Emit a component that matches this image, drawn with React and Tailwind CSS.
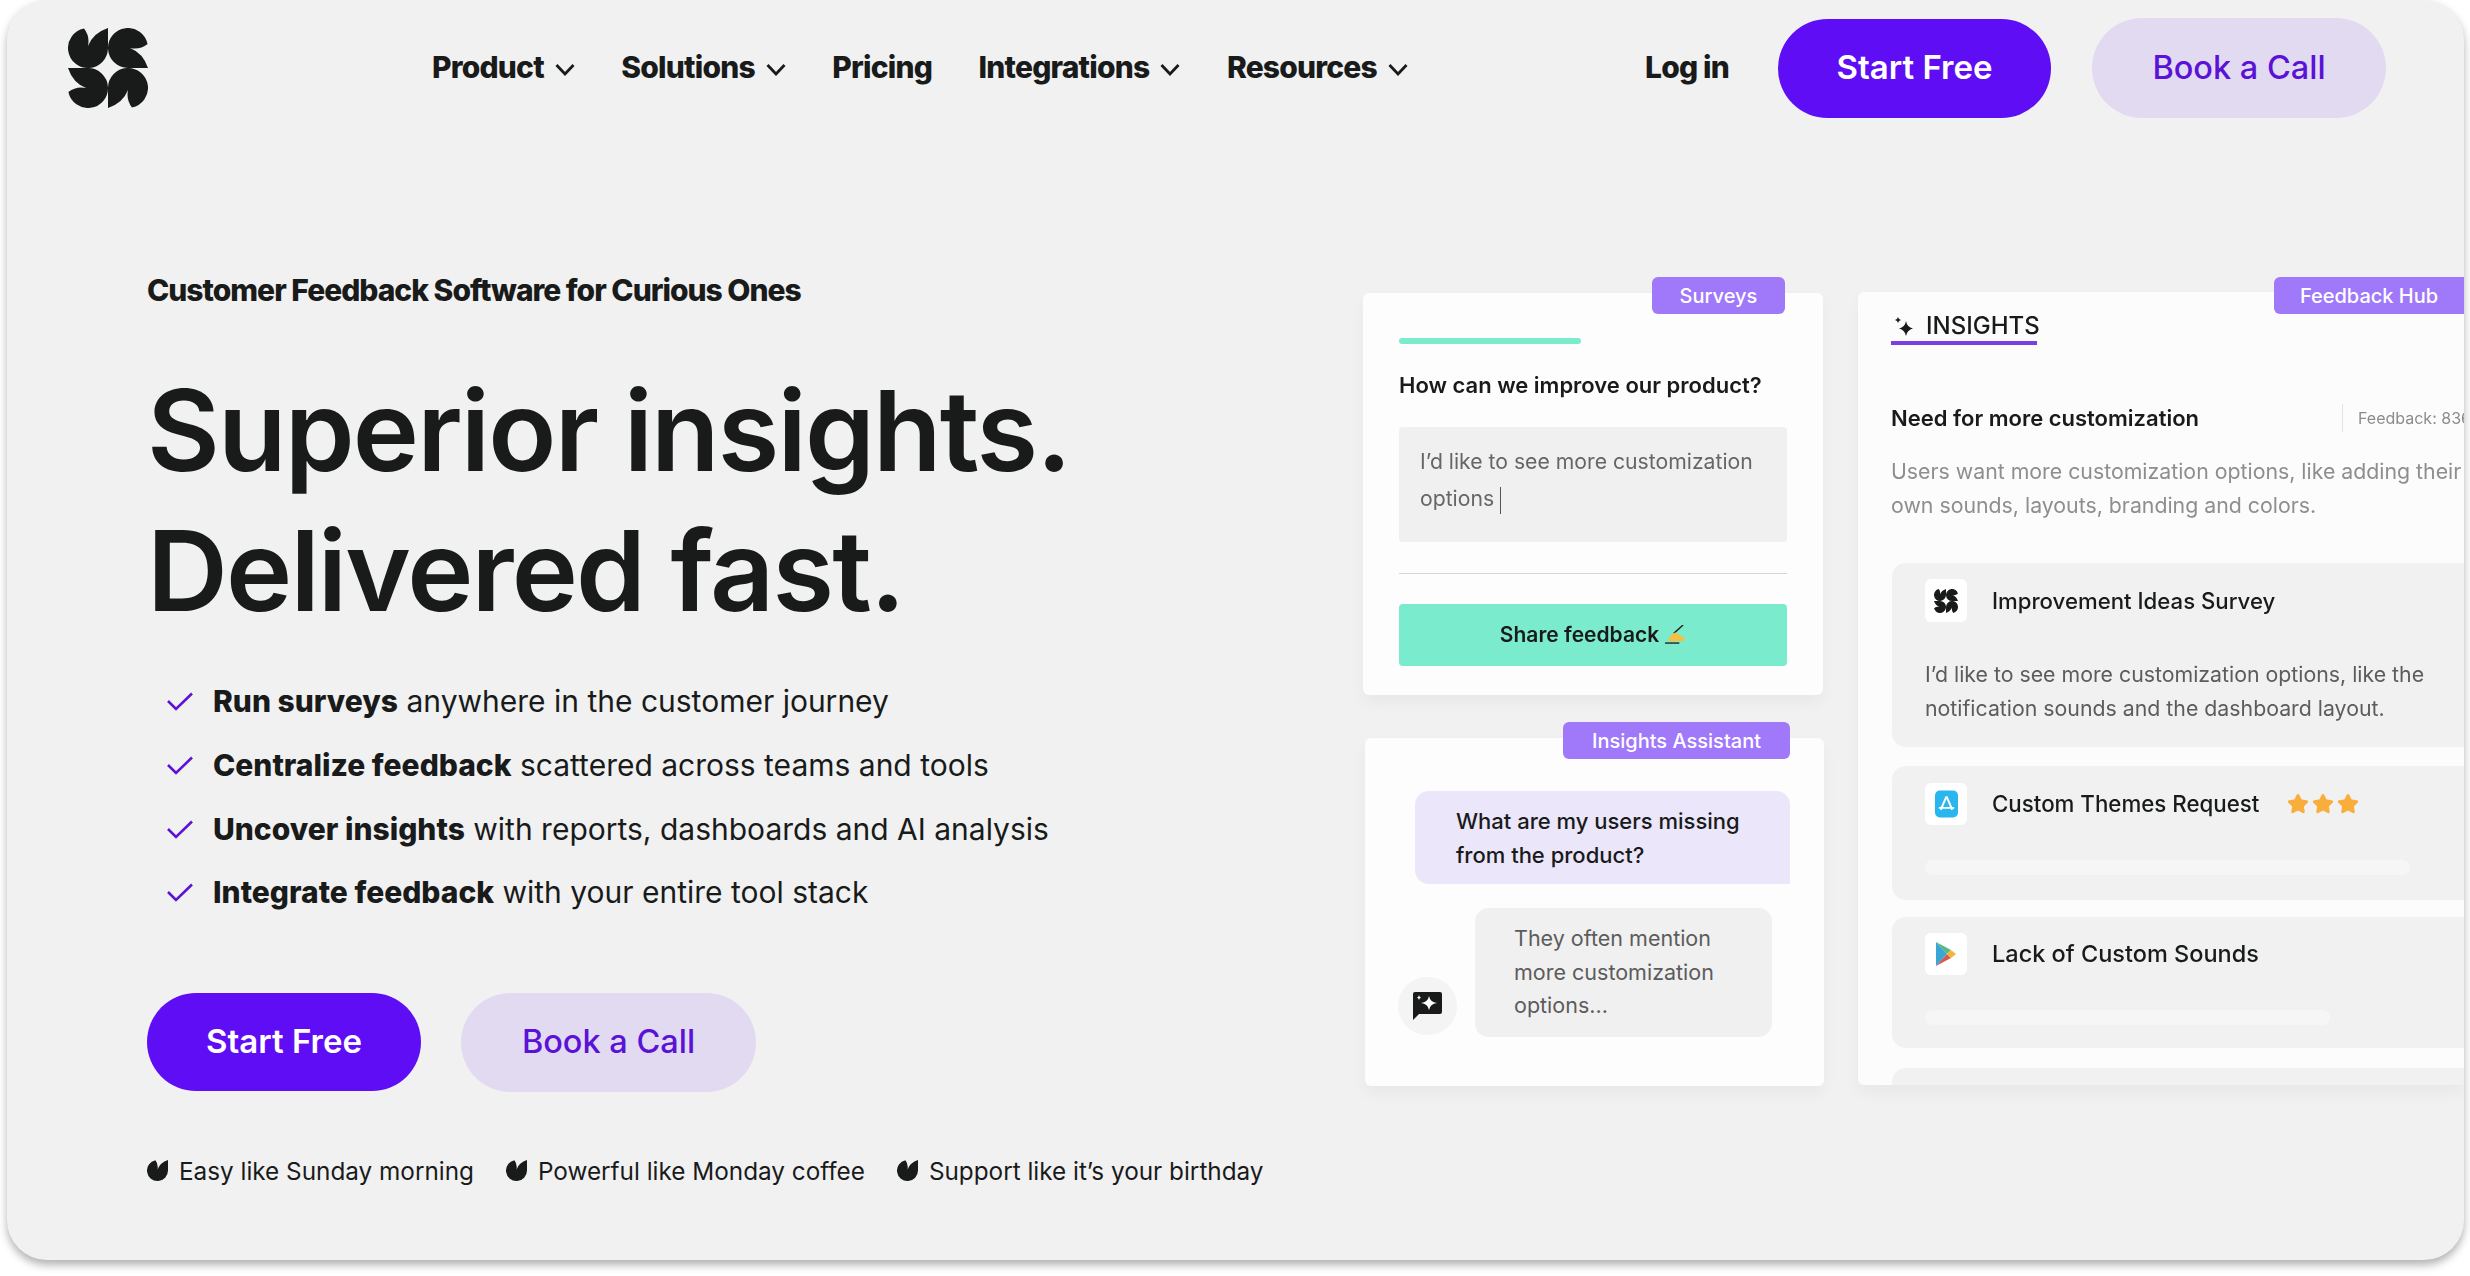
import { Star } from 'lucide-react';

// one petal of the logo; the full mark is this shape turned four times
const PETAL = 'M40 0V20A20 20 0 1 1 16 0.4Q22 8 20 18Q25 5 40 0Z';

const Logo = ({ className }) => (
  <svg viewBox="0 0 80 80" className={className} fill="#191b1b">
    {[0, 90, 180, 270].map((deg) => (
      <path key={deg} d={PETAL} transform={`rotate(${deg} 40 40)`} />
    ))}
  </svg>
);

const Leaf = () => (
  <svg viewBox="0 0 40 40" className="w-[21px] h-[21px] shrink-0" fill="#191b1b">
    <path d={PETAL} />
  </svg>
);

const Chevron = () => (
  <svg viewBox="0 0 20 13" className="w-[20px] h-[13px] ml-[11px] mt-[5px]" fill="none" stroke="#191b1b" strokeWidth="2.8">
    <path d="M1.5 2 L10 11 L18.5 2" />
  </svg>
);

const Check = () => (
  <svg viewBox="0 0 26 19" className="w-[26px] h-[19px] shrink-0" fill="none" stroke="#5a14d8" strokeWidth="2.6">
    <path d="M1 9 L9 17 L25 1.5" />
  </svg>
);

const Sparkle = () => (
  <svg viewBox="0 0 20 20" className="w-[20px] h-[20px] shrink-0" fill="#191b1b">
    <path d="M12 5 Q13 11 19 12.500 Q13 14 12 20 Q11 14 5 12.500 Q11 11 12 5Z" />
    <path d="M4 1 Q4.500 3.500 7 4 Q4.500 4.500 4 7 Q3.500 4.500 1 4 Q3.500 3.500 4 1Z" />
  </svg>
);

const ChatSpark = () => (
  <svg viewBox="0 0 29 28" className="w-[29px] h-[28px]">
    <path d="M2 0H27Q29 0 29 2V20Q29 22 27 22H6L0 28V2Q0 0 2 0Z" fill="#191b1b" />
    <path d="M16 4 Q17 10 24 11 Q17 12 16 18 Q15 12 8 11 Q15 10 16 4Z" fill="#fff" />
    <path d="M6 3 Q6.300 5 8 5.500 Q6.300 6 6 8 Q5.700 6 4 5.500 Q5.700 5 6 3Z" fill="#fff" />
  </svg>
);

const AppStore = () => (
  <svg viewBox="0 0 24 28" className="w-[23px] h-[28px]">
    <rect width="24" height="28" rx="5" fill="#29b6ef" />
    <path d="M12 6 L18 20 M12 6 L6 20 M4 18 H20" stroke="#fff" strokeWidth="2" fill="none" />
  </svg>
);

const PlayStore = () => (
  <svg viewBox="0 0 20 24" className="w-[20px] h-[24px]">
    <path d="M0 0 L11 12 L0 24Z" fill="#3aa6d8" />
    <path d="M0 0 L15 8 L11 12Z" fill="#58b884" />
    <path d="M0 24 L15 16 L11 12Z" fill="#d9594c" />
    <path d="M15 8 L20 12 L15 16 L11 12Z" fill="#f2b53a" />
  </svg>
);

const WritingHand = () => (
  <svg viewBox="0 0 22 20" className="inline-block w-[21px] h-[19px] ml-[6px] align-[-2px]">
    <path d="M9 9 L19 0" stroke="#191b1b" strokeWidth="1.5" />
    <path d="M3 17 Q6 9 11 8 L21 14 Q21 17 17 17Z" fill="#f5bf45" />
    <path d="M0 19 H15" stroke="#191b1b" strokeWidth="1.4" />
  </svg>
);

const Badge = ({ children, className }) => (
  <div className={`absolute flex items-center justify-center h-[37px] bg-[#a078fa] text-white text-[20px] font-medium ${className}`}>
    {children}
  </div>
);

const navItems = [
  { label: 'Product', menu: true },
  { label: 'Solutions', menu: true },
  { label: 'Pricing', menu: false },
  { label: 'Integrations', menu: true },
  { label: 'Resources', menu: true },
];

const points = [
  ['Run surveys', 'anywhere in the customer journey'],
  ['Centralize feedback', 'scattered across teams and tools'],
  ['Uncover insights', 'with reports, dashboards and AI analysis'],
  ['Integrate feedback', 'with your entire tool stack'],
];

const perks = ['Easy like Sunday morning', 'Powerful like Monday coffee', 'Support like it’s your birthday'];

export default function App() {
  return (
    <div className="h-[1276px] bg-white pl-[7px] pr-[6px] overflow-hidden font-['Inter',sans-serif] text-[#191b1b]">
      <div className="h-[1260px] rounded-[40px] bg-[#f1f1f2] overflow-hidden shadow-[0_5px_9px_rgba(0,0,0,0.3)]">
        {/* Nav */}
        <header className="flex items-center h-[118px] pt-[18px] pl-[61px] pr-[78px]">
          <Logo className="w-[80px] h-[80px]" />
          <nav className="flex items-center gap-[46.5px] ml-[284px] -mt-[2px] text-[30px] font-extrabold tracking-[-0.8px]">
            {navItems.map((item) => (
              <div key={item.label} className="flex items-center">
                {item.label}
                {item.menu && <Chevron />}
              </div>
            ))}
          </nav>
          <span className="ml-auto -mt-[2px] text-[30px] font-extrabold tracking-[-0.8px]">Log in</span>
          <button className="ml-[49px] w-[273px] h-[99px] rounded-[50px] bg-[#5f0df5] text-white text-[33px] font-semibold">Start Free</button>
          <button className="ml-[41px] w-[294px] h-[100px] rounded-[50px] bg-[#e2daf1] text-[#5a12d6] text-[32.5px] font-medium">Book a Call</button>
        </header>

        {/* Hero */}
        <section className="flex mt-[154px] pl-[140px]">
          <div className="w-[1216px] shrink-0">
            <p className="text-[30px] leading-[36px] font-extrabold tracking-[-1px]">Customer Feedback Software for Curious Ones</p>
            <h1 className="mt-[52px] text-[112px] leading-[140px] font-semibold tracking-[-1.85px]">
              Superior insights.
              <br />
              Delivered fast.
            </h1>
            <ul className="mt-[30px] pl-[20px] text-[30px]">
              {points.map(([strong, rest]) => (
                <li key={strong} className="flex items-center gap-[20px] h-[63.7px]">
                  <Check />
                  <span>
                    <b className="font-extrabold">{strong}</b> {rest}
                  </span>
                </li>
              ))}
            </ul>
            <div className="flex gap-[40px] mt-[68px]">
              <button className="w-[274px] h-[98px] rounded-[50px] bg-[#5f0df5] text-white text-[33px] font-semibold">Start Free</button>
              <button className="w-[295px] h-[99px] rounded-[50px] bg-[#e2daf1] text-[#5a12d6] text-[32.5px] font-medium">Book a Call</button>
            </div>
            <div className="flex gap-[32px] mt-[63px] text-[24.3px] leading-[32px]">
              {perks.map((perk) => (
                <div key={perk} className="flex items-center gap-[11px]">
                  <Leaf />
                  {perk}
                </div>
              ))}
            </div>
          </div>

          <div className="flex flex-1 min-w-0 pt-[21px] blur-[0.4px]">
            <div className="w-[461px] shrink-0 flex flex-col gap-[43px]">
              {/* Surveys card */}
              <div className="relative h-[402px] w-[460px] rounded-[6px] bg-[#fdfdfd] pt-[45px] px-[36px] shadow-[0_8px_16px_rgba(0,0,0,0.04)]">
                <Badge className="-top-[16px] right-[38px] w-[133px] rounded-[6px]">Surveys</Badge>
                <div className="w-[182px] h-[6px] rounded-[3px] bg-[#7aeccd]" />
                <p className="mt-[25px] text-[22px] leading-[32px] font-semibold">How can we improve our product?</p>
                <div className="mt-[26px] h-[115px] rounded-[4px] bg-[#f0f0f1] pl-[21px] pt-[16px] text-[21.2px] leading-[37px] text-[#666]">
                  I’d like to see more customization
                  <br />
                  options <span className="inline-block w-px h-[27px] bg-[#555] align-middle" />
                </div>
                <div className="mt-[31px] h-[1px] bg-[#d4d4d4]" />
                <button className="mt-[30px] w-full h-[62px] rounded-[4px] bg-[#7aeccd] text-[21px] font-semibold">
                  Share feedback
                  <WritingHand />
                </button>
              </div>

              {/* Insights Assistant card */}
              <div className="relative h-[348px] ml-[2px] w-[459px] rounded-[6px] bg-[#fdfdfd] pt-[53px] shadow-[0_8px_16px_rgba(0,0,0,0.04)]">
                <Badge className="-top-[16px] right-[34px] w-[227px] rounded-[6px]">Insights Assistant</Badge>
                <div className="ml-[50px] mr-[34px] h-[93px] rounded-t-[14px] rounded-bl-[14px] bg-[#ebe6fa] pl-[41px] pt-[13px] text-[22px] leading-[34px] font-medium">
                  What are my users missing
                  <br />
                  from the product?
                </div>
                <div className="flex items-end ml-[33px] mt-[24px]">
                  <div className="flex items-center justify-center w-[59px] h-[58px] mb-[2px] rounded-full bg-[#f4f4f4]">
                    <ChatSpark />
                  </div>
                  <div className="ml-[18px] w-[297px] h-[129px] rounded-[14px] bg-[#f0f0f1] pl-[39px] pt-[14px] text-[21.5px] leading-[33.5px] text-[#5c5c5c]">
                    They often mention
                    <br />
                    more customization
                    <br />
                    options...
                  </div>
                </div>
              </div>
            </div>

            {/* Feedback Hub card */}
            <div className="relative flex-1 min-w-0 ml-[34px] -mt-[1px]">
              <Badge className="-top-[15px] right-0 w-[190px] rounded-l-[6px]">Feedback Hub</Badge>
              <div className="h-[793px] overflow-hidden rounded-l-[6px] bg-[#fcfcfc] pl-[33px] pt-[19px] shadow-[0_8px_16px_rgba(0,0,0,0.04)]">
                <div className="flex items-center gap-[12px] w-[146px] h-[34px] pl-[3px] border-b-[4px] border-[#7a3fe0] text-[24px] leading-[28px] font-medium">
                  <Sparkle />
                  INSIGHTS
                </div>
                <div className="flex items-center w-[680px] h-[30px] mt-[58px]">
                  <span className="w-[451px] text-[22px] font-semibold">Need for more customization</span>
                  <span className="h-[28px] w-px bg-[#e4e4e4]" />
                  <span className="ml-[15px] text-[16px] text-[#8c8c8c] whitespace-nowrap">Feedback: 836</span>
                </div>
                <p className="mt-[21px] w-[680px] text-[21.3px] leading-[34px] text-[#8e8e8e]">
                  Users want more customization options, like adding their
                  <br />
                  own sounds, layouts, branding and colors.
                </p>

                <div className="w-[680px] mt-[41px] ml-px">
                  <div className="h-[184px] rounded-[14px] bg-[#f1f1f2] pl-[33px] pt-[16px]">
                    <div className="flex items-center">
                      <div className="flex items-center justify-center w-[42px] h-[43px] rounded-[6px] bg-white">
                        <Logo className="w-[24px] h-[24px]" />
                      </div>
                      <span className="ml-[25px] text-[22.2px] font-medium">Improvement Ideas Survey</span>
                    </div>
                    <p className="mt-[35px] text-[21.3px] leading-[34px] text-[#5c5c5c]">
                      I’d like to see more customization options, like the
                      <br />
                      notification sounds and the dashboard layout.
                    </p>
                  </div>

                  <div className="h-[134px] mt-[19px] rounded-[14px] bg-[#f1f1f2] pl-[33px] pt-[17px]">
                    <div className="flex items-center">
                      <div className="flex items-center justify-center w-[42px] h-[42px] rounded-[6px] bg-white">
                        <AppStore />
                      </div>
                      <span className="ml-[25px] text-[22.3px] font-medium">Custom Themes Request</span>
                      <span className="flex gap-[3px] ml-[28px]">
                        {[1, 2, 3].map((n) => (
                          <Star key={n} size={22} fill="#f9ae3b" stroke="#f9ae3b" />
                        ))}
                      </span>
                    </div>
                    <div className="w-[485px] h-[15px] mt-[35px] rounded-full bg-[#f6f6f6]" />
                  </div>

                  <div className="h-[131px] mt-[17px] rounded-[14px] bg-[#f1f1f2] pl-[33px] pt-[16px]">
                    <div className="flex items-center">
                      <div className="flex items-center justify-center w-[42px] h-[42px] rounded-[6px] bg-white">
                        <PlayStore />
                      </div>
                      <span className="ml-[25px] text-[23.5px] font-medium">Lack of Custom Sounds</span>
                    </div>
                    <div className="w-[405px] h-[15px] mt-[35px] rounded-full bg-[#f6f6f6]" />
                  </div>

                  <div className="h-[60px] mt-[20px] rounded-[14px] bg-[#f1f1f2]" />
                </div>
              </div>
            </div>
          </div>
        </section>
      </div>
    </div>
  );
}
